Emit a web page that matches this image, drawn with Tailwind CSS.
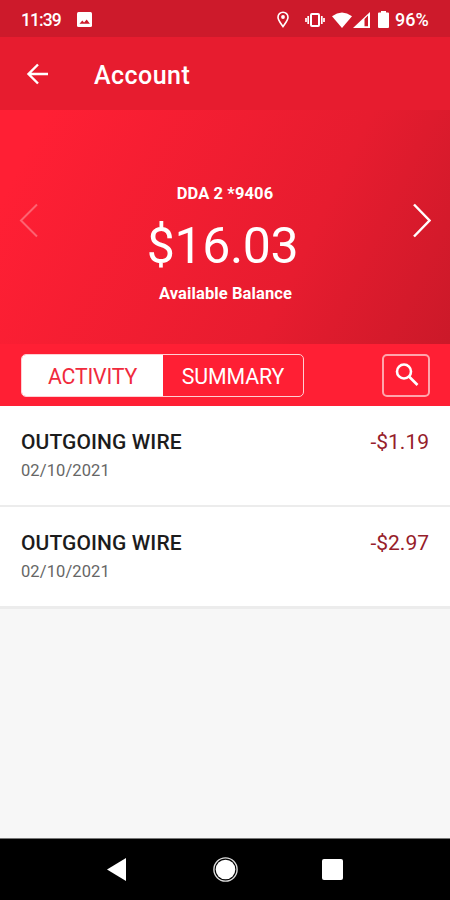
<!DOCTYPE html>
<html lang="en">
  <head>
    <meta charset="UTF-8" />
    <title>Account</title>
    <script src="https://cdn.jsdelivr.net/npm/@tailwindcss/browser@4"></script>
  </head>
  <body class="flex flex-col w-[450px] h-[900px] overflow-hidden bg-[#f7f7f7] font-[Roboto,sans-serif]">
    <!-- Status bar -->
    <div class="flex items-center justify-between h-[37px] shrink-0 bg-[#cd1a2b] pl-[21px] pr-5 pt-0.5 text-white">
      <div class="flex items-center gap-4">
        <span class="text-[17.5px] leading-5 font-medium tracking-[-0.9px] w-[40px] whitespace-nowrap">11:39</span>
        <svg class="w-[15px] h-[15px]" viewBox="0 0 15 15">
          <rect width="15" height="15" rx="1.5" fill="#fff" />
          <path d="M2.5 11.8l2.8-3.2 1.8 2 2.6-3.2 3.2 4.4z" fill="#cd1a2b" />
        </svg>
      </div>
      <div class="flex items-center">
        <svg class="w-3 h-[17px] mr-[16px]" viewBox="0 0 12 17" fill="none" stroke="#fff">
          <path d="M6 15.5C4 12.5 1 9.3 1 6.2a5 5 0 0 1 10 0C11 9.3 8 12.5 6 15.5z" stroke-width="1.6" />
          <circle cx="6" cy="6" r="1.9" fill="#fff" stroke="none" />
        </svg>
        <svg class="w-5 h-4 mr-[7px]" viewBox="0 0 20 16" fill="none" stroke="#fff" stroke-width="1.7">
          <rect x="6" y="2" width="8" height="12" rx="1" stroke-width="2" />
          <path d="M3.2 4v8M16.8 4v8M1 6v4M19 6v4" />
        </svg>
        <svg class="w-5 h-4" viewBox="0 0 20 16">
          <path d="M0 4.2Q10-3.2 20 4.2L10 16z" fill="#fff" />
        </svg>
        <svg class="w-[17px] h-4 ml-px mr-[8px]" viewBox="0 0 17 16">
          <path d="M0 16L17 0v16zM11.5 7v7.3h3.5V3.5z" fill="#fff" fill-rule="evenodd" />
        </svg>
        <svg class="w-[11px] h-[17px] mr-[6px]" viewBox="0 0 11 17">
          <path d="M3 0h5v1.500h2q1 0 1 1V16q0 1-1 1H1q-1 0-1-1V2.500q0-1 1-1h2z" fill="#fff" />
        </svg>
        <span class="text-[18px] leading-5 font-medium w-[35px] whitespace-nowrap">96%</span>
      </div>
    </div>

    <!-- App bar -->
    <header class="flex items-center h-[73px] shrink-0 bg-[#e71c2f] pl-[26px] text-white">
      <svg class="w-[23px] h-[22px]" viewBox="0 0 23 22" fill="none" stroke="#fff" stroke-width="2.4">
        <path d="M22 11H3M12 1.5L2.5 11 12 20.5" />
      </svg>
      <h1 class="ml-[45px] mt-[4px] text-[25px] leading-8 font-medium tracking-[0.45px]">Account</h1>
    </header>

    <!-- Balance -->
    <section class="flex items-center justify-between h-[234px] shrink-0 px-[19px] bg-[linear-gradient(116deg,#ff1f34_8%,#e71c2f_66%,#cb1929_100%)] text-white">
      <svg class="w-5 h-[35px] mt-[-13px] opacity-30" viewBox="0 0 20 35" fill="none" stroke="#fff" stroke-width="2">
        <path d="M18 1.5L2 17.5 18 33.5" />
      </svg>
      <div class="flex flex-col items-center pt-[34px]">
        <p class="text-[16.5px] leading-6 font-bold tracking-[0.1px]">DDA 2 *9406</p>
        <p class="mt-2 -ml-[5px] text-[50px] leading-[64px] tracking-[-0.4px]">$16.03</p>
        <p class="mt-1 ml-px text-[16.5px] leading-6 font-bold tracking-[0.1px]">Available Balance</p>
      </div>
      <svg class="w-5 h-[35px] mt-[-13px]" viewBox="0 0 20 35" fill="none" stroke="#fff" stroke-width="2.5">
        <path d="M3 1.5L18.5 17.5 3 33.5" />
      </svg>
    </section>

    <!-- Tabs -->
    <div class="flex items-center justify-between h-[62px] shrink-0 pl-[21px] pr-5 bg-[#ff1f34]">
      <div class="flex w-[283px] h-[43px] border-[1.5px] border-[#ffd0d4] rounded-[5px] overflow-hidden text-[21.3px] leading-[43px] text-center">
        <div class="w-[141px] bg-white text-[#f02a3c] tracking-[-0.2px]">ACTIVITY</div>
        <div class="flex-1 text-white tracking-[-0.1px]">SUMMARY</div>
      </div>
      <div class="flex items-center justify-center w-12 h-[43px] border-2 border-[#ffa5ac] rounded-[5px]">
        <svg class="w-6 h-6 ml-0.5" viewBox="0 0 24 24" fill="none" stroke="#fff" stroke-width="2.6">
          <circle cx="9" cy="8.5" r="7" />
          <path d="M14 13.5l8.5 8.5" />
        </svg>
      </div>
    </div>

    <!-- Transactions -->
    <ul class="shrink-0 bg-white">
      <li class="flex justify-between h-[101px] px-[21px] pt-[24px] border-b-2 border-[#ececec]">
        <div>
          <p class="text-[21px] leading-6 font-medium text-[#1c1c1c] tracking-[0.1px]">OUTGOING WIRE</p>
          <p class="mt-[7px] text-[16.5px] leading-5 text-[#666] tracking-[0.1px]">02/10/2021</p>
        </div>
        <span class="text-[21px] leading-6 text-[#96202a]">-$1.19</span>
      </li>
      <li class="flex justify-between h-[102px] px-[21px] pt-[24px] border-b-[3px] border-[#ececec]">
        <div>
          <p class="text-[21px] leading-6 font-medium text-[#1c1c1c] tracking-[0.1px]">OUTGOING WIRE</p>
          <p class="mt-[7px] text-[16.5px] leading-5 text-[#666] tracking-[0.1px]">02/10/2021</p>
        </div>
        <span class="text-[21px] leading-6 text-[#96202a]">-$2.97</span>
      </li>
    </ul>

    <!-- Navigation bar -->
    <nav class="flex items-center mt-auto h-[62px] shrink-0 border-t border-[#777] bg-black pl-[107px]">
      <svg class="w-[19px] h-[23px]" viewBox="0 0 19 23">
        <path d="M0 11.5L19 0v23z" fill="#fff" />
      </svg>
      <svg class="w-[25px] h-[25px] ml-[87px]" viewBox="0 0 25 25">
        <circle cx="12.5" cy="12.5" r="11.6" fill="none" stroke="#ddd" stroke-width="1.4" />
        <circle cx="12.5" cy="12.5" r="9.8" fill="#fff" />
      </svg>
      <div class="ml-[84px] w-[21px] h-[21px] rounded-[2px] bg-white"></div>
    </nav>
  </body>
</html>
